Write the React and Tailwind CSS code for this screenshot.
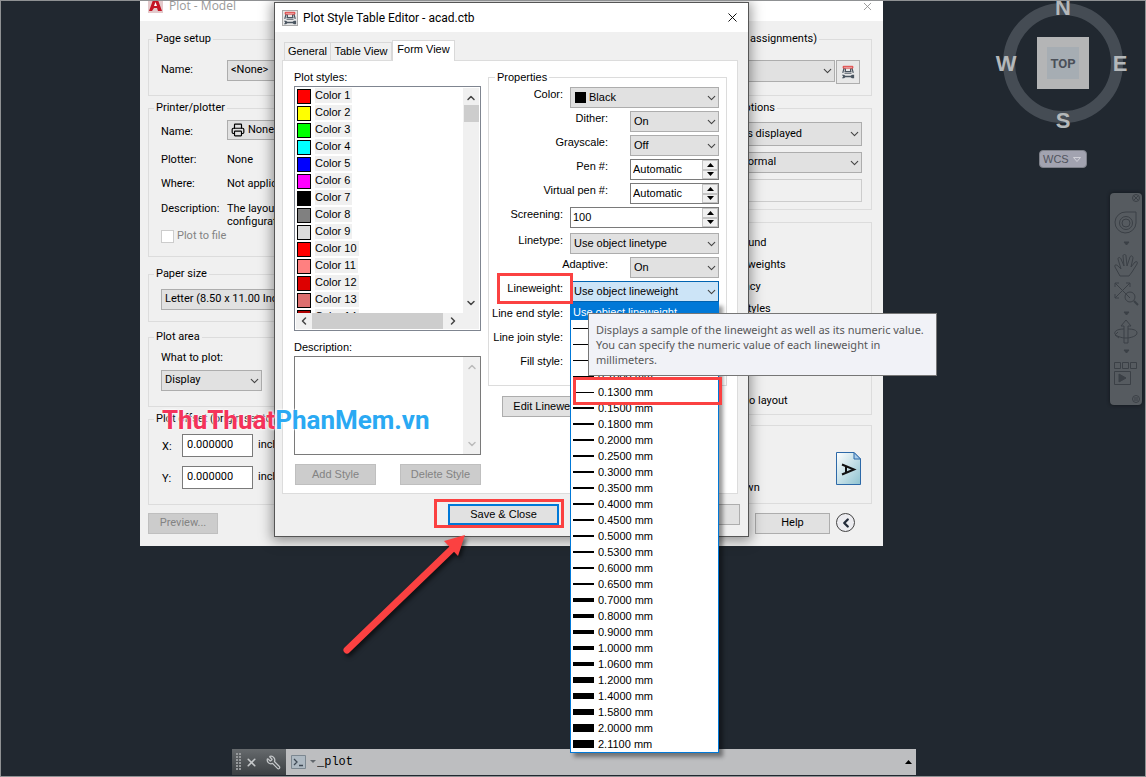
import { ChevronDown, ChevronUp, ChevronLeft, ChevronRight, Printer, X, Wrench } from 'lucide-react';

const plotStyles = [
  ['Color 1', 'bg-[#ff0000]'],
  ['Color 2', 'bg-[#ffff00]'],
  ['Color 3', 'bg-[#00ff00]'],
  ['Color 4', 'bg-[#00ffff]'],
  ['Color 5', 'bg-[#0000ff]'],
  ['Color 6', 'bg-[#ff00ff]'],
  ['Color 7', 'bg-black'],
  ['Color 8', 'bg-[#808080]'],
  ['Color 9', 'bg-[#dcdcdc]'],
  ['Color 10', 'bg-[#ff0000]'],
  ['Color 11', 'bg-[#ff8080]'],
  ['Color 12', 'bg-[#dd0000]'],
  ['Color 13', 'bg-[#dd6e6e]'],
  ['Color 14', 'bg-[#b00000]'],
];

const lineweights = [
  ['0.0000 mm', 1], ['0.0500 mm', 1], ['0.0900 mm', 1], ['0.1000 mm', 1], ['0.1300 mm', 1],
  ['0.1500 mm', 2], ['0.1800 mm', 2], ['0.2000 mm', 2], ['0.2500 mm', 2], ['0.3000 mm', 2],
  ['0.3500 mm', 2], ['0.4000 mm', 2], ['0.4500 mm', 2], ['0.5000 mm', 2], ['0.5300 mm', 2],
  ['0.6000 mm', 2], ['0.6500 mm', 2], ['0.7000 mm', 4], ['0.8000 mm', 4], ['0.9000 mm', 4],
  ['1.0000 mm', 4], ['1.0600 mm', 4], ['1.2000 mm', 6], ['1.4000 mm', 6], ['1.5800 mm', 6],
  ['2.0000 mm', 8], ['2.1100 mm', 8],
];

function Select({ id, label, value, className = 'h-[21px]', tone = 'border-[#adadad] bg-[#e1e1e1]', pad = 'pl-[3px]', children }) {
  return (
    <div className={`relative ${className}`}>
      <select id={id} aria-label={label} className={`block h-full w-full appearance-none truncate border pr-4 ${pad} ${tone}`}>
        <option>{value}</option>
      </select>
      {children}
      <ChevronDown size={13} strokeWidth={2} className="pointer-events-none absolute right-[1px] top-1/2 -translate-y-1/2 text-[#444]" />
    </div>
  );
}

function Spinner({ id, value }) {
  return (
    <div className="flex h-[21px] border border-[#7a7a7a] bg-white">
      <input id={id} defaultValue={value} className="w-full min-w-0 bg-white pl-[2px] outline-none" />
      <div className="flex w-4 shrink-0 flex-col bg-[#f0f0f0]">
        <button aria-label="Increase" className="flex flex-1 items-center justify-center border border-[#c4c4c4]">
          <svg width="7" height="4" viewBox="0 0 7 4"><path d="M0 4 3.500 0 7 4z" /></svg>
        </button>
        <button aria-label="Decrease" className="flex flex-1 items-center justify-center border border-[#c4c4c4]">
          <svg width="7" height="4" viewBox="0 0 7 4"><path d="M0 0 3.500 4 7 0z" /></svg>
        </button>
      </div>
    </div>
  );
}

function Group({ title, className = '', legend = 'ml-[5px]', children }) {
  return (
    <fieldset className={`min-w-0 border border-[#dcdcdc] ${className}`}>
      <legend className={`h-4 whitespace-nowrap px-[2px] leading-4 ${legend}`}>
        <span className="block w-max">{title}</span>
      </legend>
      {children}
    </fieldset>
  );
}

function Prop({ id, label, narrow, children }) {
  return (
    <div className="flex h-[21px] justify-end">
      <label htmlFor={id} className={`whitespace-nowrap text-right leading-[14px] ${narrow ? 'mr-[22px]' : 'mr-[7px]'}`}>{label}</label>
      <div className={narrow ? 'w-[89px]' : 'w-[149px]'}>{children}</div>
    </div>
  );
}

function TableIcon({ size = 16 }) {
  return (
    <svg width={size} height={size} viewBox="0 0 16 16" fill="none">
      <path d="M3.500 3.500 2 9M12.500 3.500 14 9M4 7.500h8M5 4v3M11 4v3" stroke="#4a5560" strokeWidth="1.400" />
      <path d="M2.500 1.500h11v2h-11z" fill="#f3dede" stroke="#dd2626" />
      <path d="M4 9.500h8" stroke="#4a5560" />
      <path d="M1 11h2.500l1.500 1.200h6L12.500 11H15v4h-2.500L11 14H5l-1.500 1H1l1.500-2z" fill="#4a5560" />
    </svg>
  );
}

function Check({ label }) {
  return (
    <label className="flex h-[22px] items-center gap-[6px] whitespace-nowrap">
      <input type="checkbox" className="size-[13px] appearance-none border border-[#555] bg-white" />
      {label}
    </label>
  );
}

function PlotDialog() {
  return (
    <section className="absolute left-[140px] top-0 w-[743px] bg-[#f0f0f0] font-['Roboto',sans-serif] text-[11px] text-black">
      <header className="flex h-[21px] items-start bg-white pl-2 pr-[9px]">
        <svg width="15" height="13" viewBox="0 0 15 13">
          <path d="M0 0h15v13H0z" fill="#e3c9cb" />
          <path d="M5 0h5l4 11h-4L9 8H6l-2 3H1z" fill="#c41424" />
          <path d="M7.500 2 9 6H6z" fill="#fff" />
        </svg>
        <h2 className="ml-[6px] font-['Open_Sans',sans-serif] text-xs leading-3 text-[#999]">Plot - Model</h2>
        <button aria-label="Close" className="ml-auto text-[#888]"><X size={13} strokeWidth={1.500} /></button>
      </header>
      <div className="flex gap-4 pl-2 pr-[11px] pt-[10px]">
        <div className="flex w-[360px] flex-col">
          <Group title="Page setup" legend="-ml-[7px]" className="px-3 pb-[14px]">
            <div className="flex items-center pt-[13px]">
              <label htmlFor="setup" className="w-[66px]">Name:</label>
              <Select id="setup" value="<None>" className="h-[21px] flex-1" />
            </div>
          </Group>
          <Group title="Printer/plotter" legend="-ml-[7px]" className="mt-1 px-3 pb-[13px]">
            <div className="flex h-7 items-center">
              <label htmlFor="printer" className="w-[66px] pt-1">Name:</label>
              <Select id="printer" value="None" className="h-5 flex-1" pad="pl-5">
                <Printer size={14} className="pointer-events-none absolute left-1 top-[3px]" />
              </Select>
            </div>
            <dl className="grid grid-cols-[66px_1fr] pt-1 leading-6">
              <dt>Plotter:</dt><dd>None</dd>
              <dt>Where:</dt><dd>Not applicable</dd>
              <dt className="pt-[6px] leading-[13px]">Description:</dt>
              <dd className="h-[34px] whitespace-nowrap pt-[6px] leading-[13px]">The layout will not be plotted<br />configuration name is selected.</dd>
            </dl>
            <label className="flex h-[13px] items-center gap-[3px] text-[#838383]">
              <input type="checkbox" disabled className="size-[13px] appearance-none border border-[#ccc] bg-white" />
              Plot to file
            </label>
          </Group>
          <Group title="Paper size" legend="-ml-[7px]" className="mt-[9px] px-3 pb-[11px] pt-[7px]">
            <Select label="Paper size" value="Letter (8.50 x 11.00 Inches)" />
          </Group>
          <Group title="Plot area" legend="-ml-[7px]" className="mt-[7px] px-3 pb-[15px] pt-[6px]">
            <label htmlFor="area" className="block h-[19px] leading-[14px]">What to plot:</label>
            <Select id="area" value="Display" className="h-[21px] w-[101px]" />
          </Group>
          <Group title="Plot offset (origin set to printable area)" legend="-ml-[7px]" className="mt-1 px-3 pb-[15px] pt-[7px]">
            <div className="flex flex-col gap-[9px]">
              {['X', 'Y'].map((axis) => (
                <div key={axis} className="flex h-[23px] items-center">
                  <label htmlFor={axis} className="w-[21px] pl-[1px] pt-1">{axis}:</label>
                  <input id={axis} defaultValue="0.000000" className="h-full w-[71px] border border-[#7a7a7a] bg-white px-1 pb-[3px]" />
                  <span className="pl-[5px]">inch</span>
                </div>
              ))}
            </div>
          </Group>
          <button disabled className="mb-3 mt-2 h-[21px] w-[70px] border border-[#bfbfbf] bg-[#ccc] text-[#838383]">Preview...</button>
        </div>
        <div className="flex flex-1 flex-col">
          <Group title="Plot style table (pen assignments)" legend="ml-[5px] flex w-[289px] justify-end" className="pb-[11px]">
            <div className="flex gap-[1px] pl-3 pr-[11px] pt-[13px]">
              <Select label="Plot style table" value="acad.ctb" className="h-[22px] flex-1" />
              <button aria-label="Edit style table" className="flex h-6 w-6 items-center justify-center border border-[#adadad] bg-[#e8e8e8]"><TableIcon size={14} /></button>
            </div>
          </Group>
          <Group title="Shaded viewport options" legend="ml-[5px] flex w-[247px] justify-end" className="mt-1 pb-[7px]">
            <div className="flex flex-col gap-[6px] pl-[211px] pr-[9px] pt-[6px]">
              <Select label="Shade plot" value="As displayed" className="h-6" />
              <Select label="Quality" value="Normal" pad="pl-[3px]" />
              <input aria-label="DPI" disabled className="h-[23px] w-full border border-[#ccc]" />
            </div>
          </Group>
          <Group title="Plot options" className="mt-1 pb-[2px]">
            <div className="flex flex-col pl-[131px] pt-[2px]">
              <Check label="Plot in background" />
              <Check label="Plot object lineweights" />
              <Check label="Plot transparency" />
              <Check label="Plot with plot styles" />
              <Check label="Plot paperspace last" />
              <Check label="Hide paperspace objects" />
              <Check label="Plot stamp on" />
              <div className="pt-1"><Check label="Save changes to layout" /></div>
            </div>
          </Group>
          <Group title="Drawing orientation" legend="ml-[5px] flex w-[221px] justify-end" className="mt-[2px] pb-[4px]">
            <div className="flex h-[66px] items-end pl-[131px] pr-[10px]">
              <Check label="Plot upside-down" />
              <svg width="25" height="33" viewBox="0 0 25 33" className="mb-[14px] ml-auto">
                <defs>
                  <linearGradient id="sheet" x1="0" y1="0" x2="1" y2="1"><stop stopColor="#fff" /><stop offset="1" stopColor="#8fc3d0" /></linearGradient>
                </defs>
                <path d="M.5.5H18L24.500 7v25.500H.5z" fill="url(#sheet)" stroke="#2d69a8" />
                <path d="M18 .5V7h6.500z" fill="#a9cdea" stroke="#2d69a8" />
                <path d="M6 12.500 18 17.500 6 22.500M10 14v7" fill="none" stroke="#111" strokeWidth="2" />
              </svg>
            </div>
          </Group>
          <div className="mt-[9px] flex items-start pl-[231px]">
            <button className="h-[21px] w-[75px] border border-[#adadad] bg-[#e1e1e1]">Help</button>
            <button aria-label="Less options" className="ml-[6px] flex size-[19px] items-center justify-center rounded-full border border-[#444] bg-[#ececf0]">
              <ChevronLeft size={14} strokeWidth={4} className="shrink-0 text-[#222b3a]" />
            </button>
          </div>
        </div>
      </div>
    </section>
  );
}

function EditorDialog() {
  return (
    <section className="absolute left-[274px] top-[2px] w-[475px] border border-[#555] bg-[#f0f0f0] pb-[11px] font-['Liberation_Sans',sans-serif] text-[11px] text-black shadow-[0_2px_12px_2px_rgba(0,0,0,0.4)]">
      <header className="flex h-[29px] items-center bg-white pl-[7px] pr-2">
        <span className="flex size-4 items-center justify-center border border-[#aaa] bg-[#e8e8e8]"><TableIcon size={14} /></span>
        <h2 className="ml-[5px] font-['Roboto',sans-serif] text-xs leading-4">Plot Style Table Editor - acad.ctb</h2>
        <button aria-label="Close" className="ml-auto"><X size={15} strokeWidth={1.500} /></button>
      </header>
      <div className="flex items-end pl-[9px] pt-2">
        <button className="h-[18px] w-[47px] border border-b-0 border-[#d9d9d9]">General</button>
        <button className="h-[18px] w-[61px] border border-b-0 border-l-0 border-[#d9d9d9]">Table View</button>
        <button className="relative -mb-[1px] h-[21px] w-[63px] border border-b-0 border-[#d9d9d9] bg-white pb-[3px]">Form View</button>
      </div>
      <div className="ml-[7px] mr-[10px] flex border border-[#dcdcdc] bg-white pl-[11px] pr-[10px] pb-2 pt-2">
        <div className="w-[187px] shrink-0">
          <h3 className="h-[17px] leading-4">Plot styles:</h3>
          <div className="flex h-[245px] flex-col border border-[#7f8590] p-[1px]">
            <div className="flex min-h-0 flex-1">
              <ul role="listbox" aria-label="Plot styles" className="flex-1 overflow-hidden">
                {plotStyles.map(([name, color]) => (
                  <li key={name} role="option" aria-selected="false" className="flex h-[17px] items-start gap-1 pl-[1px]">
                    <span className={`mt-[1px] h-[15px] w-[14px] border border-black ${color}`} />
                    <span className="bg-[#f0f0f0] pr-[2px] leading-[15px]">{name}</span>
                  </li>
                ))}
              </ul>
              <div className="flex w-4 flex-col items-center justify-between bg-[#f0f0f0] py-1 text-[#444]">
                <div className="flex flex-col items-center">
                  <ChevronUp size={12} strokeWidth={3} />
                  <span className="mt-[1px] h-[17px] w-[15px] bg-[#cdcdcd]" />
                </div>
                <ChevronDown size={12} strokeWidth={3} />
              </div>
            </div>
            <div className="flex h-4 items-center bg-[#f0f0f0] text-[#444]">
              <ChevronLeft size={12} strokeWidth={3} className="mx-[2px]" />
              <span className="h-full w-[131px] bg-[#cdcdcd]" />
              <ChevronRight size={12} strokeWidth={3} className="ml-1" />
            </div>
          </div>
          <label htmlFor="desc" className="mt-[8px] block h-[17px] leading-4">Description:</label>
          <div className="flex h-[99px] border border-[#7a7a7a]">
            <textarea id="desc" className="min-w-0 flex-1 resize-none outline-none" />
            <div className="flex w-[17px] flex-col items-center justify-between bg-[#f0f0f0] py-1 text-[#bbb]">
              <ChevronUp size={12} strokeWidth={3} />
              <ChevronDown size={12} strokeWidth={3} />
            </div>
          </div>
          <div className="mt-[9px] flex justify-between pl-[1px] text-[#838383]">
            <button className="h-[21px] w-[81px] border border-[#bfbfbf] bg-[#ccc]">Add Style</button>
            <button className="h-[21px] w-[81px] border border-[#bfbfbf] bg-[#ccc]">Delete Style</button>
          </div>
        </div>
        <div className="ml-[7px] min-w-0 flex-1">
          <Group title="Properties" legend="ml-[6px]" className="pb-[10px] pr-[7px]">
            <div className="flex flex-col gap-[3px] pt-[2px]">
              <Prop id="color" label="Color:">
                <Select id="color" value="Black" pad="pl-[18px]">
                  <span className="pointer-events-none absolute left-[5px] top-[5px] size-[11px] bg-black" />
                </Select>
              </Prop>
              <Prop id="dither" label="Dither:" narrow><Select id="dither" value="On" /></Prop>
              <Prop id="gray" label="Grayscale:" narrow><Select id="gray" value="Off" /></Prop>
              <Prop id="pen" label="Pen #:" narrow><Spinner id="pen" value="Automatic" /></Prop>
              <Prop id="vpen" label="Virtual pen #:" narrow><Spinner id="vpen" value="Automatic" /></Prop>
              <Prop id="screening" label="Screening:"><Spinner id="screening" value="100" /></Prop>
            </div>
            <div className="flex flex-col gap-[3px] pt-[5px]">
              <Prop id="ltype" label="Linetype:"><Select id="ltype" value="Use object linetype" /></Prop>
              <Prop id="adaptive" label="Adaptive:" narrow><Select id="adaptive" value="On" /></Prop>
              <Prop id="lweight" label="Lineweight:"><Select id="lweight" value="Use object lineweight" tone="border-[#0063b1] bg-[#cce4f7]" /></Prop>
            </div>
            <div className="flex flex-col gap-[3px] pt-[4px]">
              <Prop id="lend" label="Line end style:"><Select id="lend" value="Use object end style" /></Prop>
              <Prop id="ljoin" label="Line join style:"><Select id="ljoin" value="Use object join style" /></Prop>
              <Prop id="fill" label="Fill style:"><Select id="fill" value="Use object fill style" /></Prop>
            </div>
          </Group>
          <div className="flex gap-2 pl-[14px] pt-[10px]">
            <button className="h-[21px] w-[112px] border border-[#adadad] bg-[#e1e1e1]">Edit Lineweights...</button>
            <button className="h-[21px] w-[86px] border border-[#adadad] bg-[#e1e1e1]">Save As...</button>
          </div>
        </div>
      </div>
      <footer className="flex justify-end gap-[5px] pr-2 pt-[10px]">
        <button className="h-[21px] w-[111px] border-2 border-[#0078d7] bg-[#e1e1e1]">Save &amp; Close</button>
        <button className="ml-[6px] h-[21px] w-[80px] border border-[#adadad] bg-[#e1e1e1]">Cancel</button>
        <button className="h-[21px] w-[85px] border border-[#adadad] bg-[#e1e1e1]">Help</button>
      </footer>
    </section>
  );
}

function LineweightMenu() {
  return (
    <ul role="listbox" aria-label="Lineweight" className="absolute left-[570px] top-[302px] w-[149px] border border-[#0078d7] bg-white font-['Liberation_Sans',sans-serif] text-[11px] text-black shadow-[4px_4px_4px_rgba(0,0,0,0.4)]">
      <li role="option" aria-selected="true" className="h-[17px] bg-[#0078d7] pl-[2px] leading-[18px] text-white">Use object lineweight</li>
      {lineweights.map(([name, weight]) => (
        <li key={name} role="option" aria-selected="false" className="flex h-4 items-center gap-1 pl-[2px] leading-4">
          <span className="w-[21px] bg-black" style={{ height: weight }} />
          {name}
        </li>
      ))}
    </ul>
  );
}

function ViewCube() {
  return (
    <div className="absolute right-[22px] top-0 flex w-[122px] flex-col items-center">
      <svg width="136" height="132" viewBox="-68 -63 136 132" className="shrink-0 font-['Liberation_Sans',sans-serif] text-[22px] font-bold" textAnchor="middle" fill="#b4b8ba">
        <circle r="54" fill="none" stroke="#454c54" strokeWidth="12" />
        <path d="M-26-26h52v52h-52z" fill="#b4b5b6" />
        <path d="M-16-16h32v32h-32z" fill="#a6adb3" />
        <text y="5" className="font-['Roboto',sans-serif] text-[13px]" fill="#4b5059">TOP</text>
        <text y="-48">N</text>
        <text y="65">S</text>
        <text x="-57" y="8">W</text>
        <text x="57" y="8">E</text>
      </svg>
      <button className="mt-[18px] flex h-[18px] w-12 items-center gap-1 rounded-[4px] border border-[#7d8089] bg-[#a2a3b0] pl-[3px] font-['Liberation_Sans',sans-serif] text-[11px] text-[#50535c]">
        WCS
        <svg width="8" height="5" viewBox="0 0 8 5"><path d="M.5.5h7L4 4.500z" fill="none" stroke="#d0d0d8" /></svg>
      </button>
    </div>
  );
}

function NavBar() {
  return (
    <nav className="absolute right-1 top-[193px] rounded-[4px] bg-[#565b60] shadow-[0_0_3px_1px_#171c22]">
      <svg width="32" height="212" viewBox="0 0 32 212" fill="none" stroke="#3b4046" strokeWidth="1">
        <circle cx="26" cy="5" r="3.500" /><path d="m24 3 4 4m0-4-4 4" />
        <path d="M16 19h10v11a10.500 10.500 0 1 1-10-11z" /><circle cx="16" cy="30" r="6.500" /><circle cx="16" cy="30" r="4" />
        <path d="M14 49h5l-2.500 3z" fill="#3b4046" />
        <path d="M10 83 5 74c-1-2 1-3 3-1l3 3-3-10c0-2 2-2 3 0l3 7-1-10c0-2 3-2 3 0l1 10 3-9c1-2 3-1 3 1l-2 9 4-5c2-1 3 0 2 2l-5 8-3 4z" />
        <path d="m5 90 15 15M20 90 5 105M5 94v-4h4M16 90h4v4M5 101v4h4" /><circle cx="20" cy="104" r="5" /><path d="m24 108 4 4" strokeWidth="2" />
        <path d="M14 119h5l-2.500 3z" fill="#3b4046" />
        <path d="M14 150v-17h-3l5-6 5 6h-3v17zM14 136c-8 0-10 3-9 5s6 4 11 4 11-2 11-5-4-4-9-4M8 139l-3 3 4 3" />
        <path d="M14 157h5l-2.500 3z" fill="#3b4046" />
        <path d="M4.500 169.500h6v6h-6zM12.500 169.500h6v6h-6zM20.500 169.500h6v6h-6zM4.500 178.500h16v13h-16z" /><path d="m9 181 7 4-7 4z" fill="#3b4046" />
        <circle cx="26" cy="206" r="3.500" /><path d="M24 205h4M24 207h4" />
      </svg>
    </nav>
  );
}

function CommandLine() {
  return (
    <div className="absolute bottom-[2px] left-[232px] right-[230px] flex h-[26px] items-stretch">
      <div className="flex w-[54px] items-center gap-2 bg-linear-to-b from-[#666a6d] to-[#3c4043] pl-1 text-[#c5c8ca]">
        <svg width="5" height="18" viewBox="0 0 5 18" fill="#96999b">
          {[0, 3, 6, 9, 12, 15].map((y) => (
            <path key={y} d={`M0 ${y}h2v2H0zM3 ${y}h2v2H3z`} />
          ))}
        </svg>
        <button aria-label="Close"><X size={13} strokeWidth={3} className="-ml-1" /></button>
        <button aria-label="Customize"><Wrench size={15} strokeWidth={2} className="-scale-x-100" /></button>
      </div>
      <div className="flex flex-1 items-center bg-[#bdbec0] pl-[5px] pr-1">
        <svg width="15" height="14" viewBox="0 0 15 14" fill="none" stroke="#3e4853">
          <path d="M.5.5h14v13H.5z" fill="#aeb9c2" stroke="#7c8790" /><path d="m3 4 3 3-3 3M8 10.500h4" strokeWidth="1.300" />
        </svg>
        <svg width="6" height="4" viewBox="0 0 6 4" className="ml-1"><path d="M0 0h6L3 3z" fill="#63686d" /></svg>
        <input aria-label="Command" defaultValue="_plot" className="ml-[1px] min-w-0 flex-1 font-['Liberation_Mono',monospace] text-xs text-black outline-none" />
        <svg width="7" height="4" viewBox="0 0 7 4"><path d="M0 4 3.500 0 7 4z" /></svg>
      </div>
    </div>
  );
}

export default function App() {
  return (
    <main className="relative min-h-screen w-full overflow-hidden bg-[#212830]">
      <ViewCube />
      <NavBar />
      <CommandLine />
      <PlotDialog />
      <EditorDialog />
      <LineweightMenu />

      <div role="tooltip" className="absolute left-[588px] top-[313px] w-[349px] border border-[#767676] bg-[#f1f2f7] px-[7px] pb-2 pt-[8px] font-['Noto_Sans',sans-serif] text-[11px] leading-[15px] text-[#575757]">
        Displays a sample of the lineweight as well as its numeric value.<br />
        You can specify the numeric value of each lineweight in<br />
        millimeters.
      </div>

      {/* callouts */}
      <span className="absolute left-[497px] top-[273px] h-[31px] w-[76px] border-3 border-[#fb4141]" />
      <span className="absolute left-[573px] top-[377px] h-[28px] w-[149px] border-3 border-[#fb4141]" />
      <span className="absolute left-[434px] top-[499px] h-[29px] w-[130px] border-3 border-[#fb4141]" />
      <svg width="136" height="130" viewBox="0 0 136 130" className="absolute left-[338px] top-[530px] drop-shadow-[2px_3px_2px_rgba(0,0,0,0.6)]">
        <path d="M9 120 116 17" stroke="#fb4141" strokeWidth="7" strokeLinecap="round" />
        <path d="m127 5-21 6 14 15z" fill="#fb4141" />
      </svg>

      <p className="absolute left-[162px] top-[404px] whitespace-nowrap font-['Roboto',sans-serif] text-[26px] font-bold leading-8 text-[#f4335a] [text-shadow:0_0_3px_#fff,0_0_2px_#fff]">
        ThuThuat<span className="text-[#2aa9f3]">PhanMem.vn</span>
      </p>
      <div className="pointer-events-none absolute inset-0 border border-[#8f9193]" />
    </main>
  );
}
